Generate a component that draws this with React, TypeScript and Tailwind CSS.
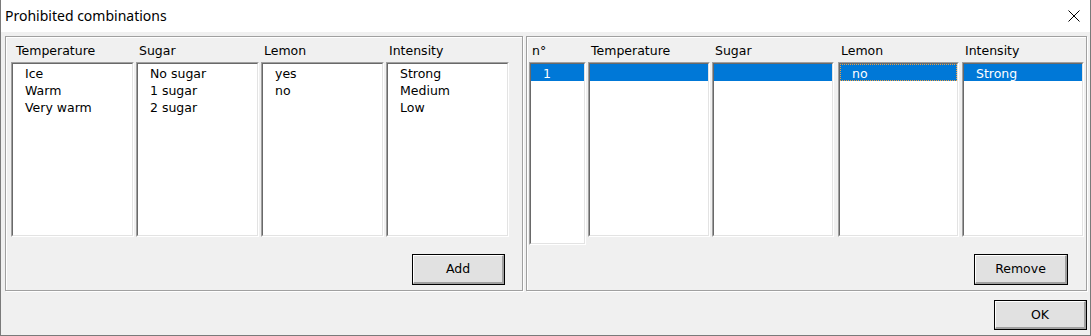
import React from "react";

type Row = { text: string; selected?: boolean; focus?: boolean };

function ListBox({ rows, className }: { rows: Row[]; className: string }) {
  return (
    <div className={`border-t border-l border-[#a0a0a0] border-r border-b border-r-white border-b-white ${className}`}>
      <div className="h-full border-t border-l border-[#696969] border-r border-b border-r-[#e3e3e3] border-b-[#e3e3e3] bg-white">
        {rows.map((r, i) =>
          r.selected ? (
            <div
              key={i}
              className={`h-[17px] bg-[#0078d7] pl-[12px] pt-[2px] leading-[15px] text-white ${r.focus ? "outline outline-1 outline-dotted outline-[#f0a040] -outline-offset-1" : ""}`}
            >
              {r.text}
            </div>
          ) : (
            <div key={i} className="h-[17px] pl-[12px] pt-[2px] leading-[15px]">
              {r.text}
            </div>
          )
        )}
      </div>
    </div>
  );
}

function Column({ label, rows, listClass = "w-[123px] h-[175px]", labelPad = "pl-[3px]" }: { label: string; rows: Row[]; listClass?: string; labelPad?: string }) {
  return (
    <div className="flex flex-col">
      <div className={`h-[20px] pt-[1px] leading-[15px] ${labelPad}`}>{label}</div>
      <ListBox rows={rows} className={listClass} />
    </div>
  );
}

function Button({ label, className }: { label: string; className: string }) {
  return (
    <button className={`border border-black bg-[#e1e1e1] p-0 ${className}`}>
      <div className="flex h-full w-full items-center justify-center border-t border-l border-white border-r-2 border-b-2 border-r-[#a0a0a0] border-b-[#a0a0a0] pt-[1px]">
        {label}
      </div>
    </button>
  );
}

function GroupBox({ children, className }: { children: React.ReactNode; className: string }) {
  return (
    <div className={`border border-[#a0a0a0] shadow-[inset_1px_1px_0_#fff,1px_1px_0_#fff] ${className}`}>{children}</div>
  );
}

export default function App() {
  return (
    <div className="flex h-[336px] w-[1091px] flex-col border border-t-0 border-[#7a7a7a] bg-[#f0f0f0] font-['DejaVu_Sans',sans-serif] text-[12.5px] text-black">
      <div className="flex h-[32px] items-center justify-between bg-white pl-[4px] pr-[9px]">
        <span className="font-['Noto_Sans',sans-serif] text-[14px] leading-none">Prohibited combinations</span>
        <svg width="12" height="12" viewBox="0 0 12 12" className="mr-[1px]">
          <path d="M0.5 0.5 L11.5 11.5 M11.5 0.5 L0.5 11.5" stroke="#000" strokeWidth="1" />
        </svg>
      </div>
      <div className="flex gap-[3px] pl-[4px] pt-[4px]">
        <GroupBox className="flex h-[255px] w-[518px] flex-col pl-[5px] pt-[5px]">
          <div className="flex gap-[2px]">
            <Column label="Temperature" labelPad="pl-[5px]" rows={[{ text: "Ice" }, { text: "Warm" }, { text: "Very warm" }]} />
            <Column label="Sugar" rows={[{ text: "No sugar" }, { text: "1 sugar" }, { text: "2 sugar" }]} />
            <Column label="Lemon" rows={[{ text: "yes" }, { text: "no" }]} />
            <Column label="Intensity" rows={[{ text: "Strong" }, { text: "Medium" }, { text: "Low" }]} />
          </div>
          <div className="mt-[17px] flex justify-end pr-[17px]">
            <Button label="Add" className="h-[31px] w-[93px]" />
          </div>
        </GroupBox>
        <GroupBox className="relative h-[255px] w-[561px] pl-[2px] pt-[5px]">
          <div className="flex">
            <Column label="n°" listClass="w-[57px] h-[183px]" rows={[{ text: "1", selected: true }]} />
            <div className="ml-[2px]">
              <Column label="Temperature" listClass="w-[122px] h-[175px]" rows={[{ text: "", selected: true }]} />
            </div>
            <div className="ml-[2px]">
              <Column label="Sugar" listClass="w-[122px] h-[175px]" rows={[{ text: "", selected: true }]} />
            </div>
            <div className="ml-[4px]">
              <Column label="Lemon" listClass="w-[121px] h-[175px]" rows={[{ text: "no", selected: true, focus: true }]} />
            </div>
            <div className="ml-[3px]">
              <Column label="Intensity" listClass="w-[122px] h-[175px]" rows={[{ text: "Strong", selected: true }]} />
            </div>
          </div>
          <div className="absolute bottom-[5px] right-[18px]">
            <Button label="Remove" className="h-[31px] w-[94px]" />
          </div>
        </GroupBox>
      </div>
      <div className="flex justify-end pr-[3px] pt-[9px]">
        <Button label="OK" className="h-[30px] w-[93px]" />
      </div>
    </div>
  );
}
